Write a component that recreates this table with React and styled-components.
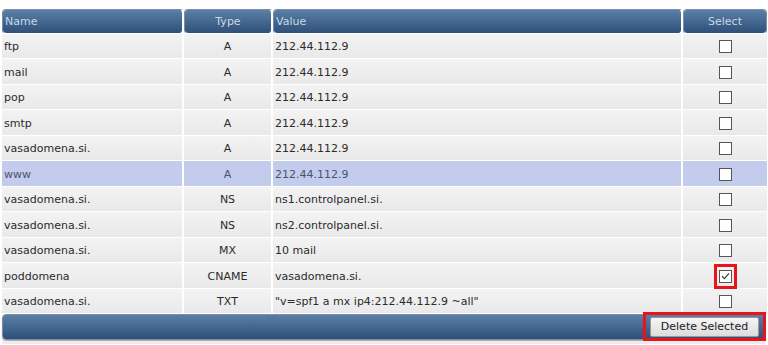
import React, { useState } from 'react'
import styled, { createGlobalStyle } from 'styled-components'

const GlobalStyle = createGlobalStyle`
   body {
      margin: 0;
      background: #ffffff;
      font-family: 'DejaVu Sans', Verdana, sans-serif;
   }
`

const records = [
   { name: 'ftp', type: 'A', value: '212.44.112.9' },
   { name: 'mail', type: 'A', value: '212.44.112.9' },
   { name: 'pop', type: 'A', value: '212.44.112.9' },
   { name: 'smtp', type: 'A', value: '212.44.112.9' },
   { name: 'vasadomena.si.', type: 'A', value: '212.44.112.9' },
   { name: 'www', type: 'A', value: '212.44.112.9', hover: true },
   { name: 'vasadomena.si.', type: 'NS', value: 'ns1.controlpanel.si.' },
   { name: 'vasadomena.si.', type: 'NS', value: 'ns2.controlpanel.si.' },
   { name: 'vasadomena.si.', type: 'MX', value: '10 mail' },
   { name: 'poddomena', type: 'CNAME', value: 'vasadomena.si.', checked: true },
   { name: 'vasadomena.si.', type: 'TXT', value: '"v=spf1 a mx ip4:212.44.112.9 ~all"' },
]

export default function App() {
   const [selected, setSelected] = useState(records.map((r) => !!r.checked))

   const toggle = (i) => {
      setSelected((prev) => prev.map((v, j) => (j === i ? !v : v)))
   }

   return (
      <>
         <GlobalStyle />
         <Wrapper>
            <Table>
               <colgroup>
                  <col style={{ width: 182 }} />
                  <col style={{ width: 89 }} />
                  <col style={{ width: 410 }} />
                  <col style={{ width: 84 }} />
               </colgroup>
               <thead>
                  <tr>
                     <HeadCell>Name</HeadCell>
                     <HeadCell $center>Type</HeadCell>
                     <HeadCell>Value</HeadCell>
                     <HeadCell $center>Select</HeadCell>
                  </tr>
               </thead>
               <tbody>
                  {records.map((r, i) => (
                     <Row key={i} $hover={r.hover} $tall={i % 2 === 1}>
                        <Cell>{r.name}</Cell>
                        <Cell $center>{r.type}</Cell>
                        <Cell>{r.value}</Cell>
                        <Cell $center>
                           <CheckWrap $marked={r.checked}>
                              <Check onClick={() => toggle(i)}>
                                 {selected[i] && (
                                    <svg width="9" height="8" viewBox="0 0 9 8">
                                       <path d="M1 4.2 L3.4 6.6 L8 1.4" fill="none" stroke="#444" strokeWidth="1.3" />
                                    </svg>
                                 )}
                              </Check>
                           </CheckWrap>
                        </Cell>
                     </Row>
                  ))}
               </tbody>
            </Table>
            <Footer>
               <Marked>
                  <DeleteButton>Delete Selected</DeleteButton>
               </Marked>
            </Footer>
            <BottomLine />
         </Wrapper>
      </>
   )
}

const Wrapper = styled.div`
   width: 763px;
   padding: 9px 0 0 2px;
`
const Table = styled.table`
   table-layout: fixed;
   border-collapse: separate;
   border-spacing: 0;
   width: 765px;
   font-size: 11px;
   color: #2b2b2b;
`
const HeadCell = styled.th`
   box-sizing: border-box;
   height: 25px;
   padding: 0 2px;
   text-align: ${(p) => (p.$center ? 'center' : 'left')};
   font-weight: normal;
   color: #c9d7e6;
   background: linear-gradient(#5a7ea5 0%, #466a92 45%, #2f5078 100%) padding-box;
   border: 1px solid #7a8ea6;
   border-right: 2px solid #fff;
   border-bottom: 1px solid #fff;
   border-radius: 4px;
   &:last-child {
      border-right: 1px solid #7a8ea6;
   }
`
const Row = styled.tr`
   td {
      height: ${(p) => (p.$tall ? '26px' : '25px')};
      background: ${(p) =>
         p.$hover ? '#c4ccee' : 'linear-gradient(#f3f3f3, #e9e9e9)'} padding-box;
      color: ${(p) => (p.$hover ? '#4a5468' : '#2b2b2b')};
   }
`
const Cell = styled.td`
   box-sizing: border-box;
   padding: 1px 2px 0;
   line-height: 13px;
   text-align: ${(p) => (p.$center ? 'center' : 'left')};
   white-space: nowrap;
   border-right: 2px solid #fff;
   border-bottom: 1px solid #fff;
   &:last-child {
      border-right: 0;
   }
`
const CheckWrap = styled.div`
   display: flex;
   align-items: center;
   justify-content: center;
   width: 23px;
   height: 25px;
   margin: -6px auto;
   box-sizing: border-box;
   border: ${(p) => (p.$marked ? '3px solid #e8141c' : '3px solid transparent')};
`
const Check = styled.span`
   display: inline-flex;
   align-items: center;
   justify-content: center;
   width: 13px;
   height: 13px;
   box-sizing: border-box;
   border: 1px solid #555;
   background: #fff;
   cursor: pointer;
`
const Footer = styled.div`
   display: flex;
   justify-content: flex-end;
   align-items: center;
   width: 763px;
   height: 26px;
   box-sizing: border-box;
   border: 1px solid #7a8ea6;
   border-radius: 4px;
   background: linear-gradient(#5a7ea5 0%, #466a92 45%, #2f5078 100%);
   box-shadow: 0 1px 1px rgba(0, 0, 0, 0.35);
`
const Marked = styled.div`
   display: flex;
   align-items: center;
   box-sizing: border-box;
   height: 29px;
   padding: 0 4px;
   margin: -1px -2px 0 0;
   border: 3px solid #e8141c;
`
const DeleteButton = styled.button`
   width: 109px;
   height: 20px;
   padding: 0;
   font-family: 'DejaVu Sans', Verdana, sans-serif;
   font-size: 11px;
   color: #222;
   background: linear-gradient(#f6f6f6, #dcdcdc);
   border: 1px solid #9a9a9a;
   border-radius: 2px;
   cursor: pointer;
`
const BottomLine = styled.div`
   height: 3px;
   margin-top: 1px;
   background: #ececec;
`
